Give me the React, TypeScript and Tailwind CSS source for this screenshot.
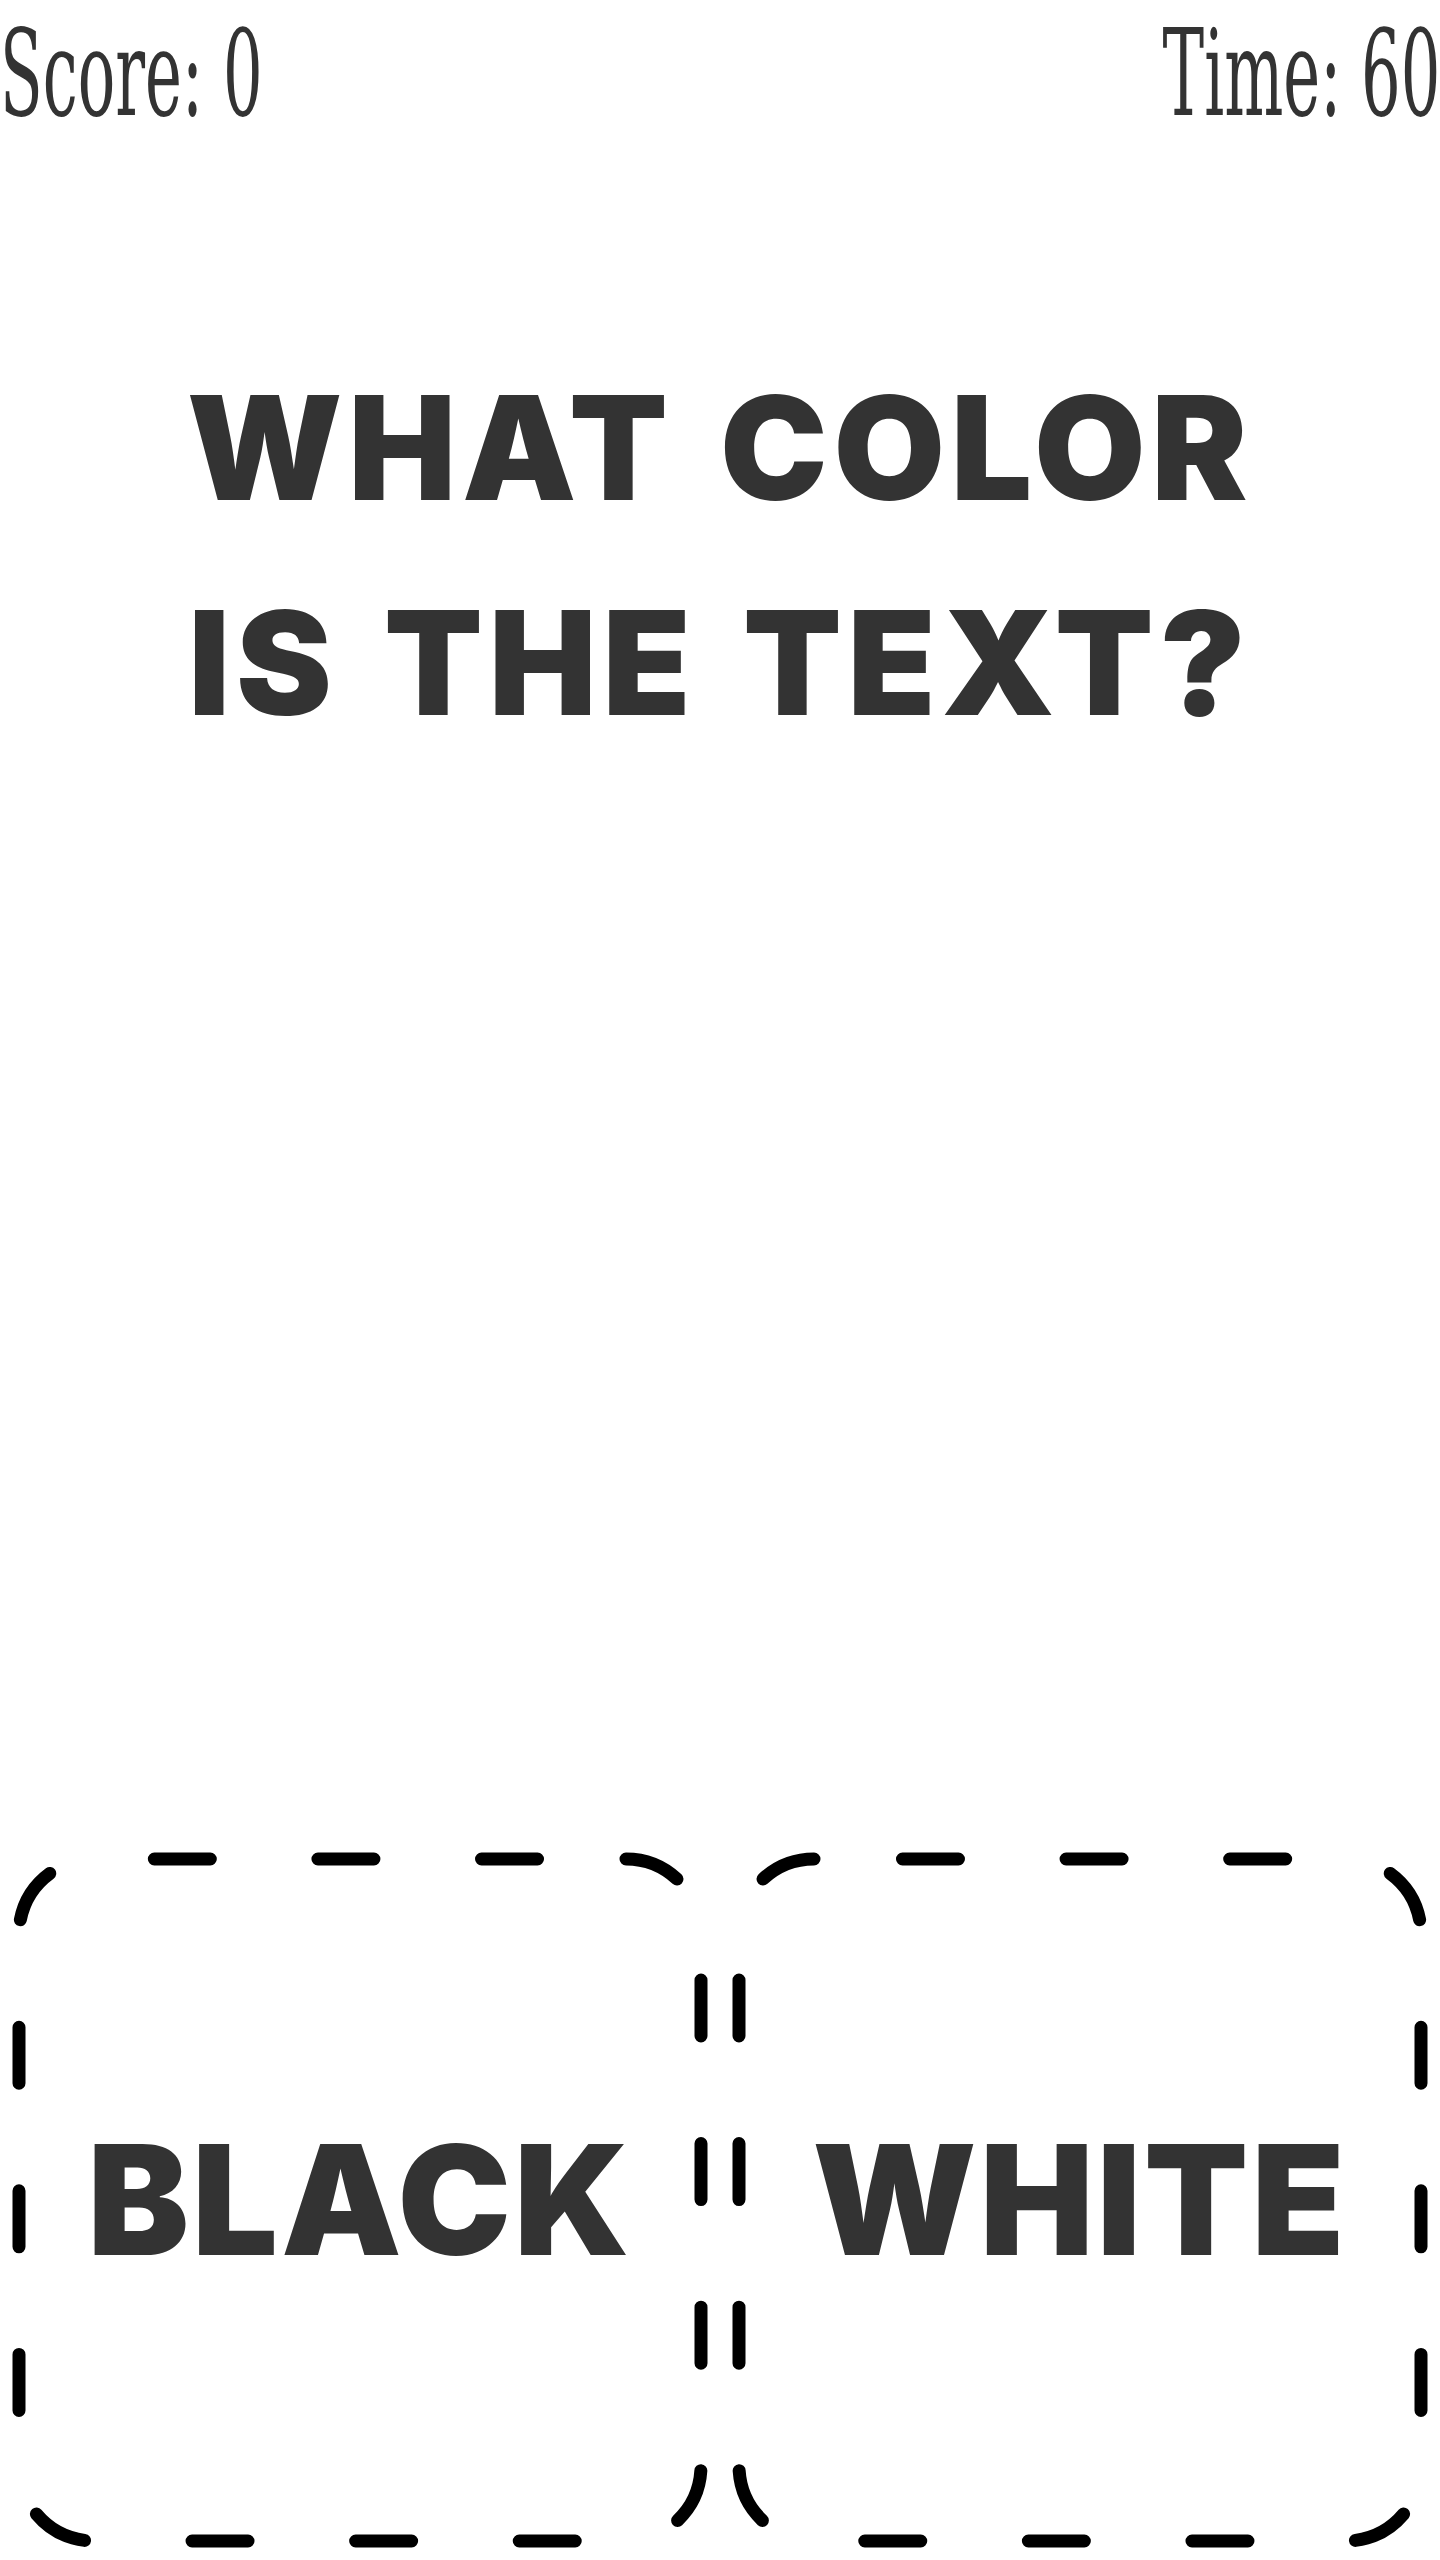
import React from 'react';

// rounded square, path starts at the top-right corner so the dash pattern
// lines up the same way as the original border
const BORDER_PATH =
  'M626 19 A75 75 0 0 1 701 94 V626 A75 75 0 0 1 626 701 H94 A75 75 0 0 1 19 626 V94 A75 75 0 0 1 94 19 Z';

const DashedSquare = ({ mirrored = false }: { mirrored?: boolean }) => (
  <svg
    viewBox="0 0 720 720"
    className="absolute inset-0 h-full w-full"
    fill="none"
    aria-hidden="true"
  >
    <g transform={mirrored ? 'translate(720 0) scale(-1 1)' : undefined}>
      <path
        d={BORDER_PATH}
        stroke="#000"
        strokeWidth="13"
        strokeLinecap="round"
        strokeDasharray="56 107.6"
      />
    </g>
  </svg>
);

const ChoiceButton = ({ label, mirrored }: { label: string; mirrored?: boolean }) => (
  <button
    type="button"
    className="relative flex h-[720px] items-center justify-center bg-transparent"
  >
    <DashedSquare mirrored={mirrored} />
    <span className="relative font-['Inter',sans-serif] text-[152px] font-black leading-none tracking-[0.02em] text-[#333333]">
      {label}
    </span>
  </button>
);

export default function App() {
  return (
    <div className="flex h-[2560px] w-[1440px] flex-col overflow-hidden bg-white text-[#333333]">
      {/* score + timer */}
      <div className="flex items-start justify-between pt-[4px] font-['DejaVu_Serif',serif] text-[120px] leading-[140px] whitespace-nowrap">
        <div className="origin-left scale-x-[0.52]">Score: 0</div>
        <div className="origin-right scale-x-[0.52]">Time: 60</div>
      </div>

      {/* question */}
      <h1 className="mt-[196px] text-center font-['Inter',sans-serif] text-[144px] font-black leading-[215px] tracking-[0.04em] [word-spacing:12px]">
        <span className="block">WHAT COLOR</span>
        <span className="block">IS THE TEXT?</span>
      </h1>

      <div className="flex-1" />

      {/* answers */}
      <div className="grid grid-cols-2">
        <ChoiceButton label="BLACK" />
        <ChoiceButton label="WHITE" mirrored />
      </div>
    </div>
  );
}
